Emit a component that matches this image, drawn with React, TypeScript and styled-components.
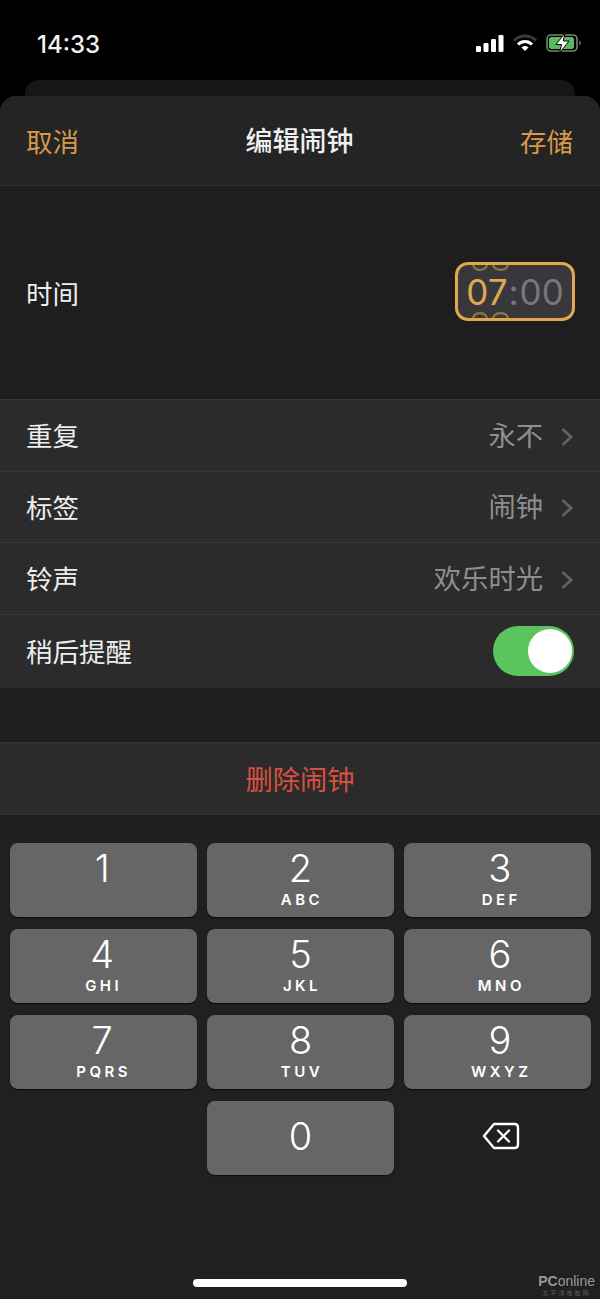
import styled, { createGlobalStyle } from "styled-components";

const CJK = `Inter, "Noto Sans CJK SC", sans-serif`;

const GlobalStyle = createGlobalStyle`
  html, body {
    margin: 0;
    padding: 0;
    background: #000;
  }
  * {
    box-sizing: border-box;
  }
`;

const keys = [
  { digit: "1", letters: "" },
  { digit: "2", letters: "ABC" },
  { digit: "3", letters: "DEF" },
  { digit: "4", letters: "GHI" },
  { digit: "5", letters: "JKL" },
  { digit: "6", letters: "MNO" },
  { digit: "7", letters: "PQRS" },
  { digit: "8", letters: "TUV" },
  { digit: "9", letters: "WXYZ" },
];

const SignalIcon = () => (
  <svg width="28" height="17" viewBox="0 0 28 17">
    <rect x="0" y="11" width="5" height="6" rx="1.2" fill="#fff" />
    <rect x="7.5" y="8" width="5" height="9" rx="1.2" fill="#fff" />
    <rect x="15" y="4" width="5" height="13" rx="1.2" fill="#fff" />
    <rect x="22.5" y="0" width="5" height="17" rx="1.2" fill="#fff" />
  </svg>
);

const WifiIcon = () => (
  <svg width="24" height="18" viewBox="0 0 24 18">
    <path d="M1 6.5C7 0.5 17 0.5 23 6.5" fill="none" stroke="#3a3a3a" strokeWidth="3" />
    <path d="M5 10.5C9 6.5 15 6.5 19 10.5" fill="none" stroke="#fff" strokeWidth="3" />
    <path d="M8.5 13.5C10.5 11.5 13.5 11.5 15.5 13.5L12 17Z" fill="#fff" />
  </svg>
);

const BatteryIcon = () => (
  <svg width="36" height="20" viewBox="0 0 36 20">
    <rect x="1" y="2" width="30" height="16" rx="4" fill="none" stroke="#6f8f6c" strokeWidth="1.6" />
    <rect x="3" y="4" width="25" height="12" rx="2.5" fill="#5fb760" />
    <path d="M33 7.5c1.5.4 2 1.4 2 2.5s-.5 2.100-2 2.500z" fill="#5c5c5c" />
    <path d="M19 0L10 11.500H15.500L13.500 20L23 8H17.200Z" fill="#fff" stroke="#000" strokeWidth="1" />
  </svg>
);

const DeleteIcon = () => (
  <svg width="38" height="28" viewBox="0 0 38 28">
    <path
      d="M12 2H32.500C34.500 2 36 3.500 36 5.500V22.500C36 24.500 34.500 26 32.500 26H12L2 14Z"
      fill="none"
      stroke="#fff"
      strokeWidth="2.400"
      strokeLinejoin="round"
    />
    <path d="M16 8.500L27 19.500M27 8.500L16 19.500" stroke="#fff" strokeWidth="2.200" strokeLinecap="round" />
  </svg>
);

const Chevron = () => (
  <svg width="14" height="20" viewBox="0 0 14 20">
    <path d="M2.500 2L11 10L2.500 18" fill="none" stroke="#616161" strokeWidth="3" />
  </svg>
);

const PickerArcs = () => (
  <svg width="37" height="6" viewBox="0 0 37 6">
    <path d="M1 0C3 6.500 13 6.500 15 0M21 0C23 6.500 34 6.500 36 0" fill="none" stroke="#8f7540" strokeWidth="2.200" />
  </svg>
);

const App = () => {
  return (
    <Page>
      <GlobalStyle />
      <StatusBar>
        <Clock>14:33</Clock>
        <StatusIcons>
          <SignalIcon />
          <WifiIcon />
          <BatteryIcon />
        </StatusIcons>
      </StatusBar>
      <BackSheet />
      <Sheet>
        <Header>
          <HeaderAction>取消</HeaderAction>
          <Title>编辑闹钟</Title>
          <HeaderAction>存储</HeaderAction>
        </Header>

        <TimeSection>
          <RowLabel>时间</RowLabel>
          <TimePicker>
            <TopArcs>
              <PickerArcs />
            </TopArcs>
            <Hour>07</Hour>
            <Colon>:</Colon>
            <Minute>00</Minute>
            <BottomArcs>
              <PickerArcs />
            </BottomArcs>
          </TimePicker>
        </TimeSection>

        <Group>
          <Row>
            <RowLabel>重复</RowLabel>
            <RowValue>
              永不
              <Chevron />
            </RowValue>
          </Row>
          <Row>
            <RowLabel>标签</RowLabel>
            <RowValue>
              闹钟
              <Chevron />
            </RowValue>
          </Row>
          <Row>
            <RowLabel>铃声</RowLabel>
            <RowValue>
              欢乐时光
              <Chevron />
            </RowValue>
          </Row>
          <Row $last>
            <RowLabel>稍后提醒</RowLabel>
            <Toggle>
              <Knob />
            </Toggle>
          </Row>
        </Group>

        <DeleteRow>删除闹钟</DeleteRow>

        <Keyboard>
          <KeyGrid>
            {keys.map((k) => (
              <Key key={k.digit}>
                <Digit>{k.digit}</Digit>
                <Letters>{k.letters}</Letters>
              </Key>
            ))}
            <BlankKey />
            <Key>
              <Digit $zero>0</Digit>
            </Key>
            <BlankKey>
              <DeleteIcon />
            </BlankKey>
          </KeyGrid>
          <HomeBar />
          <Watermark>
            <WatermarkName>
              PC<span>online</span>
            </WatermarkName>
            <WatermarkSub>太平洋电脑网</WatermarkSub>
          </Watermark>
        </Keyboard>
      </Sheet>
    </Page>
  );
};

export default App;

const Page = styled.div`
  width: 600px;
  height: 1299px;
  overflow: hidden;
  background: #000;
  font-family: ${CJK};
`;

const StatusBar = styled.div`
  height: 80px;
  padding: 0 18px 0 37px;
  display: flex;
  justify-content: space-between;
  align-items: flex-start;
`;

const Clock = styled.div`
  margin-top: 30px;
  color: #f2f2f2;
  font-size: 24px;
  font-weight: 500;
  line-height: 30px;
`;

const StatusIcons = styled.div`
  margin-top: 33px;
  display: flex;
  align-items: center;
  gap: 9px;
`;

const BackSheet = styled.div`
  height: 16px;
  margin: 0 25px;
  background: #161616;
  border-radius: 14px 14px 0 0;
`;

const Sheet = styled.div`
  background: #1e1e1e;
  border-radius: 16px 16px 0 0;
  overflow: hidden;
`;

const Header = styled.div`
  height: 90px;
  padding: 2px 27px 0 26px;
  display: flex;
  justify-content: space-between;
  align-items: center;
  background: #242424;
  border-bottom: 1px solid #2f2f2f;
`;

const HeaderAction = styled.div`
  color: #d59a4a;
  font-size: 26.500px;
  line-height: 34px;
`;

const Title = styled.div`
  color: #f0f0f0;
  font-size: 27px;
  line-height: 34px;
  font-weight: 500;
`;

const TimeSection = styled.div`
  height: 213px;
  padding: 2px 25px 0 26px;
  display: flex;
  justify-content: space-between;
  align-items: center;
  background: #1e1e1e;
`;

const RowLabel = styled.div`
  color: #ededed;
  font-size: 26.500px;
  line-height: 34px;
`;

const TimePicker = styled.div`
  position: relative;
  width: 120px;
  height: 59px;
  margin-top: -4px;
  display: flex;
  justify-content: center;
  align-items: center;
  background: #38383c;
  border: 3px solid #e0a94f;
  border-radius: 13px;
  font-family: Inter, sans-serif;
  font-size: 35px;
  font-weight: 400;
`;

const TopArcs = styled.div`
  position: absolute;
  left: 14px;
  top: 0;
  display: flex;
`;

const BottomArcs = styled.div`
  position: absolute;
  left: 14px;
  bottom: 0;
  display: flex;
  transform: scaleY(-1);
`;

const Hour = styled.span`
  color: #e0a94f;
`;

const Colon = styled.span`
  color: #77777b;
  margin: 0 1px;
`;

const Minute = styled.span`
  color: #77777b;
`;

const Group = styled.div`
  background: #2b2b2b;
  border-top: 1px solid #383838;
`;

const Row = styled.div<{ $last?: boolean }>`
  height: ${({ $last }) => ($last ? "73px" : "71.500px")};
  padding: 2px 26px 0;
  display: flex;
  justify-content: space-between;
  align-items: center;
  border-bottom: 1px solid ${({ $last }) => ($last ? "#2f2f2f" : "#363636")};
`;

const RowValue = styled.div`
  margin-top: 1px;
  display: flex;
  align-items: center;
  gap: 17px;
  color: #8f8f8f;
  font-size: 27.300px;
  line-height: 34px;
`;

const Toggle = styled.div`
  width: 81px;
  height: 50px;
  margin-top: -2px;
  padding: 3px 2px;
  display: flex;
  justify-content: flex-end;
  background: #5cc45f;
  border-radius: 25px;
`;

const Knob = styled.div`
  width: 44px;
  height: 44px;
  background: #fff;
  border-radius: 50%;
`;

const DeleteRow = styled.div`
  height: 73px;
  margin-top: 54px;
  display: flex;
  justify-content: center;
  align-items: center;
  background: #2b2b2b;
  border-top: 1px solid #343434;
  border-bottom: 1px solid #303030;
  color: #d9503f;
  font-size: 27.300px;
`;

const Keyboard = styled.div`
  position: relative;
  height: 466px;
  margin-top: 18px;
  padding: 10px 9px 0 10px;
  background: #202020;
`;

const KeyGrid = styled.div`
  display: grid;
  grid-template-columns: repeat(3, 1fr);
  grid-auto-rows: 74px;
  column-gap: 9.500px;
  row-gap: 12px;
`;

const Key = styled.div`
  display: flex;
  flex-direction: column;
  align-items: center;
  background: #666666;
  border-radius: 8px;
  box-shadow: 0 1px 1px #0a0a0a;
  color: #fff;

  &:nth-child(3n + 1) {
    padding-right: 3px;
  }

  &:nth-child(3n) {
    padding-left: 5px;
  }
`;

const BlankKey = styled.div`
  padding: 0 0 3px 8px;
  display: flex;
  justify-content: center;
  align-items: center;
`;

const Digit = styled.div<{ $zero?: boolean }>`
  margin-top: ${({ $zero }) => ($zero ? "12px" : "2px")};
  font-size: 38px;
  font-weight: 300;
  line-height: 46px;
`;

const Letters = styled.div`
  margin-top: 0;
  font-size: 15px;
  font-weight: 600;
  line-height: 18px;
  letter-spacing: 3.500px;
  padding-left: 3px;
`;

const HomeBar = styled.div`
  width: 214px;
  height: 8px;
  margin: 104px auto 0 183px;
  background: #fff;
  border-radius: 4px;
`;

const Watermark = styled.div`
  position: absolute;
  right: 5px;
  bottom: 2px;
  display: flex;
  flex-direction: column;
  align-items: center;
`;

const WatermarkName = styled.div`
  color: #999;
  font-size: 14px;
  font-weight: 600;
  line-height: 15px;
  font-family: "Liberation Sans", sans-serif;

  span {
    font-weight: 400;
  }
`;

const WatermarkSub = styled.div`
  color: #5c5c5c;
  font-size: 6px;
  line-height: 8px;
  letter-spacing: 2px;
`;
